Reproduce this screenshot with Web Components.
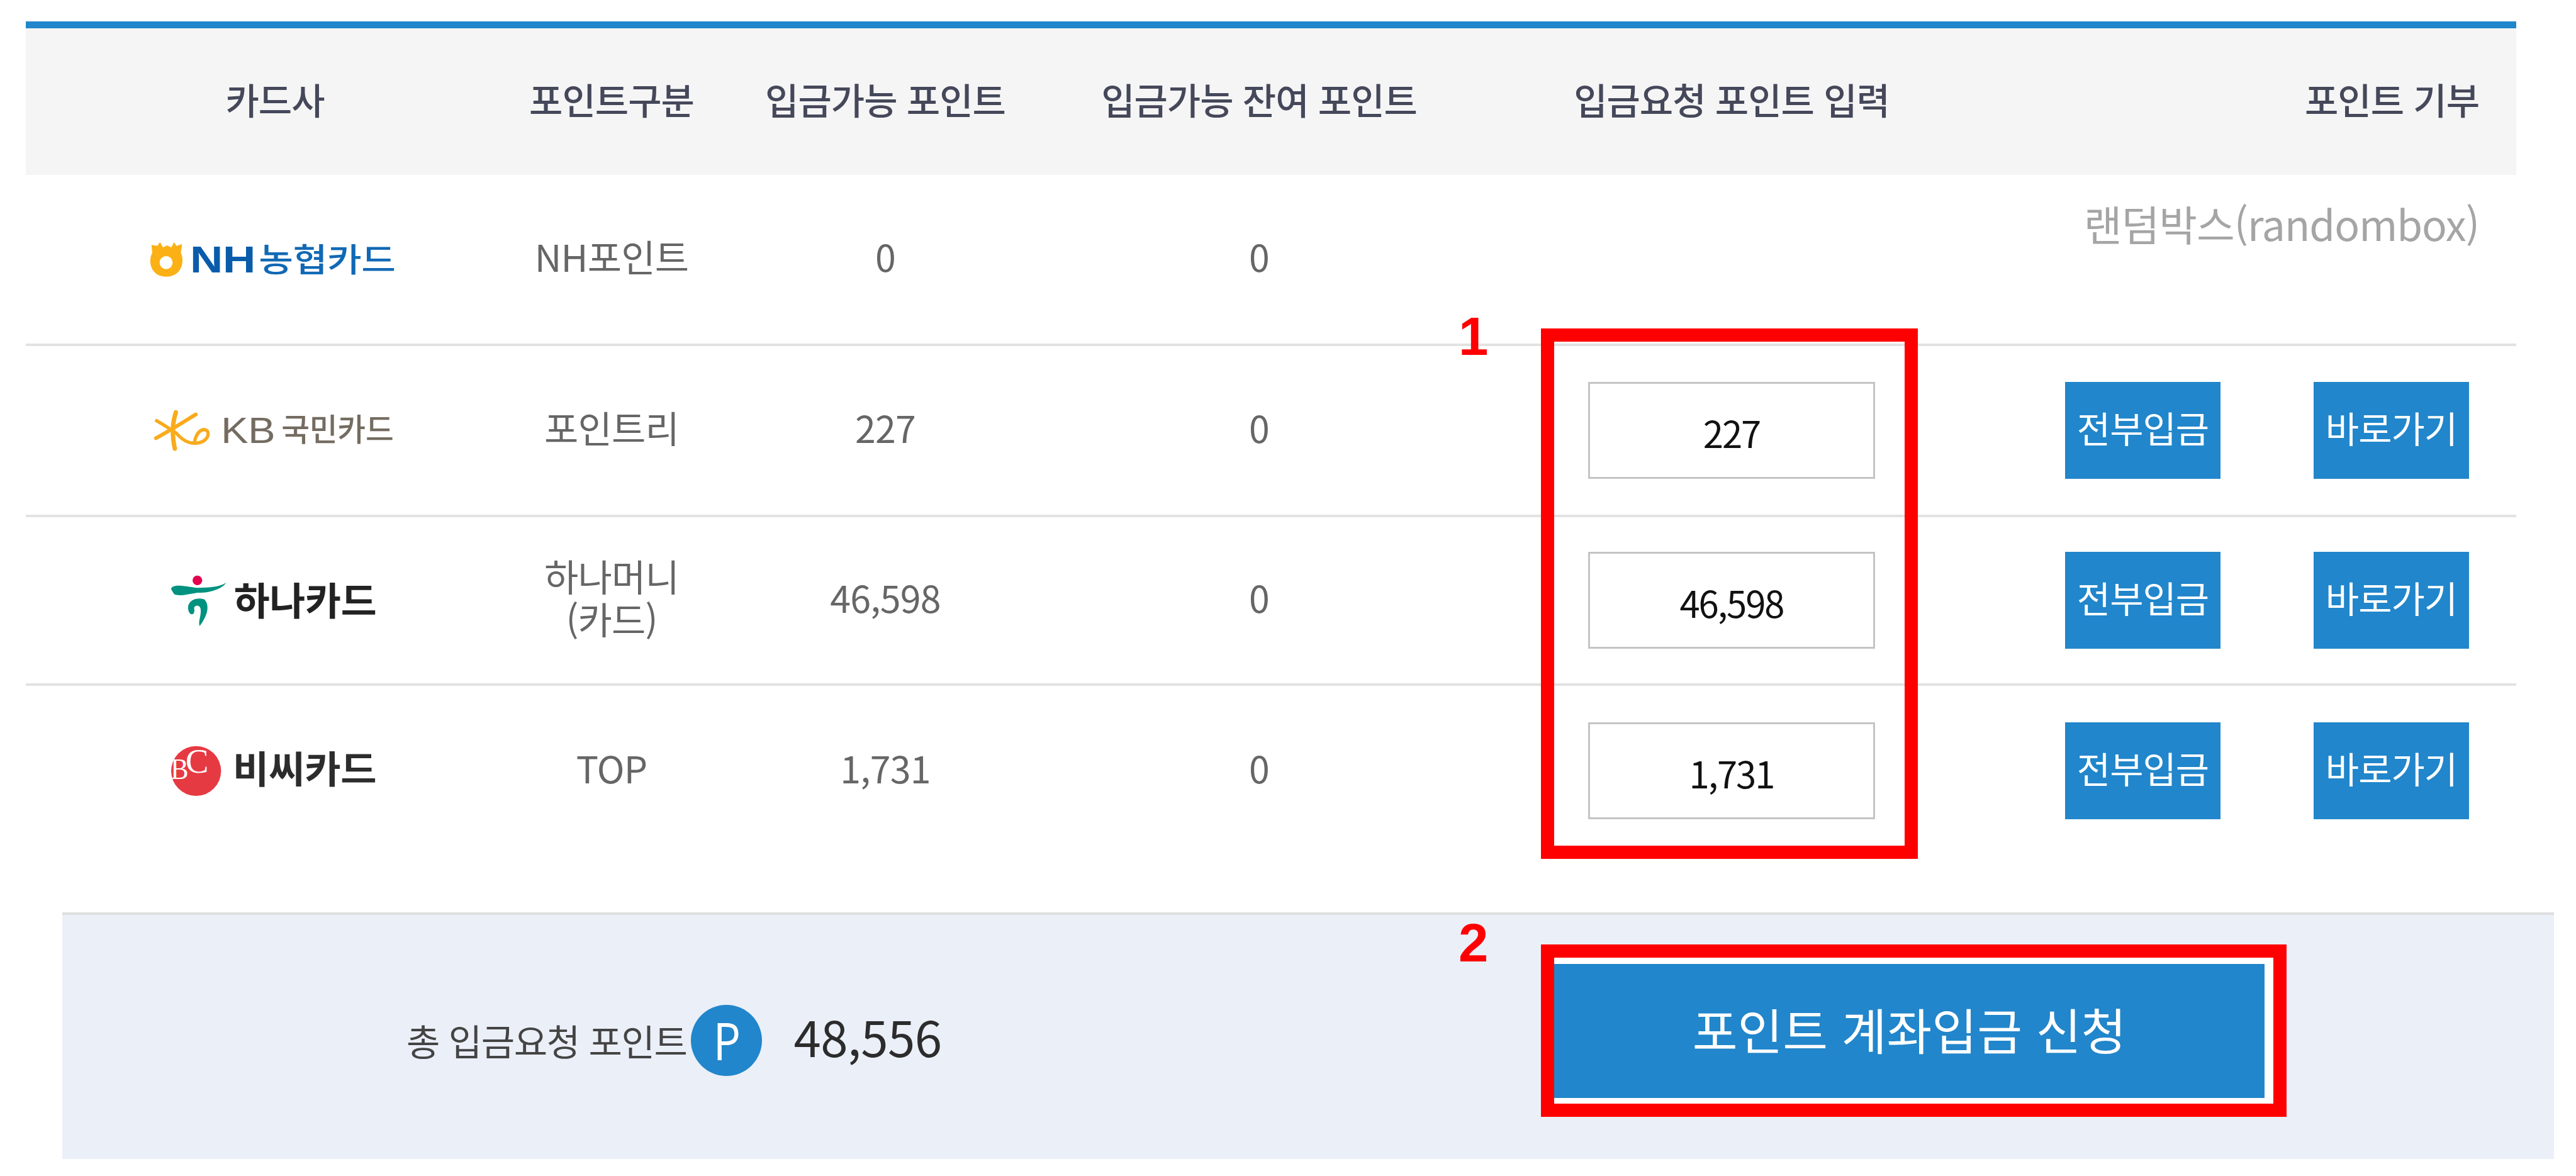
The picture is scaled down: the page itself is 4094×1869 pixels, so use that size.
<!DOCTYPE html>
<html lang="ko">
<head>
<meta charset="utf-8">
<title>포인트 계좌입금</title>
<style>
  html, body { margin: 0; background: #fff; }
  body {
    width: 4094px; height: 1869px; overflow: hidden; position: relative;
    font-family: "Noto Sans CJK KR", "Noto Sans", sans-serif;
    --cols: 792px 278px 592px 596px 906px 794px;
  }
</style>
</head>
<body>
  <point-page>
    <point-table>
      <point-row h="272">
        <card-logo slot="logo" name="nh"></card-logo>
        <span slot="kind">NH포인트</span>
        <span slot="avail">0</span>
        <span slot="rest">0</span>
        <span slot="note">랜덤박스(randombox)</span>
      </point-row>
      <point-row h="272">
        <card-logo slot="logo" name="kb"></card-logo>
        <span slot="kind">포인트리</span>
        <span slot="avail">227</span>
        <span slot="rest">0</span>
        <amount-field slot="field">227</amount-field>
        <action-btn slot="act">전부입금</action-btn>
        <action-btn slot="act">바로가기</action-btn>
      </point-row>
      <point-row h="268">
        <card-logo slot="logo" name="hana"></card-logo>
        <span slot="kind">하나머니<br>(카드)</span>
        <span slot="avail">46,598</span>
        <span slot="rest">0</span>
        <amount-field slot="field">46,598</amount-field>
        <action-btn slot="act">전부입금</action-btn>
        <action-btn slot="act">바로가기</action-btn>
      </point-row>
      <point-row h="270" last>
        <card-logo slot="logo" name="bc"></card-logo>
        <span slot="kind">TOP</span>
        <span slot="avail">1,731</span>
        <span slot="rest">0</span>
        <amount-field slot="field">1,731</amount-field>
        <action-btn slot="act">전부입금</action-btn>
        <action-btn slot="act">바로가기</action-btn>
      </point-row>
    </point-table>
    <sum-panel total="48,556" label="포인트 계좌입금 신청">총 입금요청 포인트</sum-panel>
    <mark-box n="1" x="2449" y="522" w="599" h="843" nx="2318" ny="486"></mark-box>
    <mark-box n="2" x="2449" y="1501" w="1185" h="274" nx="2318" ny="1450"></mark-box>
  </point-page>

<script>
class PointPage extends HTMLElement {
  constructor() {
    super();
    this.attachShadow({ mode: 'open' }).innerHTML = `
      <style>
        :host { display: block; padding: 34px 0 0 41px; }
      </style>
      <slot></slot>`;
  }
}

class PointTable extends HTMLElement {
  constructor() {
    super();
    this.attachShadow({ mode: 'open' }).innerHTML = `
      <style>
        :host { display: block; width: 3958px; }
        .head {
          display: grid; grid-template-columns: var(--cols);
          height: 233px; align-items: center;
          border-top: 11px solid #2186cb; background: #f5f5f5;
          color: #45485a; font-size: 58px; font-weight: 500; letter-spacing: -1px; text-align: center;
        }
        .head div { padding-bottom: 10px; }
        .head .last { text-align: right; padding-right: 59px; }
      </style>
      <div class="head">
        <div>카드사</div><div>포인트구분</div><div>입금가능 포인트</div>
        <div>입금가능 잔여 포인트</div><div>입금요청 포인트 입력</div><div class="last">포인트 기부</div>
      </div>
      <slot></slot>`;
  }
}

class PointRow extends HTMLElement {
  constructor() {
    super();
    this.attachShadow({ mode: 'open' }).innerHTML = `
      <style>
        :host { display: block; }
        .row {
          display: grid; grid-template-columns: var(--cols); align-items: center;
          box-sizing: border-box; border-bottom: 4px solid #e2e2e2;
          color: #666; font-size: 59px; line-height: 68px; letter-spacing: -0.8px; text-align: center;
        }
        :host([last]) .row { border-bottom: 0; }
        .txt { padding-bottom: 10px; }
        .logo { display: flex; justify-content: center; padding-right: 4px; }
        .field { display: flex; justify-content: center; }
        .act { display: flex; justify-content: flex-end; gap: 148px; padding-right: 75px; }
        .note {
          align-self: start; padding: 42px 59px 0 0; text-align: right;
          color: #a5a5a5; font-size: 66px; letter-spacing: -1px;
        }
      </style>
      <div class="row">
        <div class="logo"><slot name="logo"></slot></div>
        <div class="txt"><slot name="kind"></slot></div>
        <div class="txt"><slot name="avail"></slot></div>
        <div class="txt"><slot name="rest"></slot></div>
        <div class="field"><slot name="field"></slot></div>
        <div class="act"><slot name="act"></slot></div>
      </div>`;
    this.shadowRoot.querySelector('.row').style.height = this.getAttribute('h') + 'px';
  }
  connectedCallback() {
    // first row has the note instead of the buttons
    if (this.querySelector('[slot=note]')) {
      const act = this.shadowRoot.querySelector('.act');
      act.className = 'note';
      act.innerHTML = '<slot name="note"></slot>';
    }
  }
}

const LOGOS = {
  nh: { box: '120 90 1170 254', w: 390, h: 84.67, svg: `
    <path d="M122 148 L150 152 L163 134 L177 160 L197 150 L217 160 L230 134 L241 152 L268 144 L262 185 C277 215 272 262 240 285 C215 304 170 304 145 285 C113 262 110 215 126 185Z" fill="#fbb015"/>
    <circle cx="192" cy="232" r="31" fill="#fff"/>
    <text x="306" y="280" font-family="Liberation Sans" font-weight="700" font-size="176" textLength="312" lengthAdjust="spacingAndGlyphs" fill="#0a5cab">NH</text>
    <text x="634" y="277" font-family="Noto Sans CJK KR" font-weight="500" font-size="158" textLength="652" lengthAdjust="spacingAndGlyphs" fill="#1169b5">농협카드</text>` },
  kb: { box: '125 905 1160 250', w: 387, h: 83.33, svg: `
    <g fill="none" stroke="#f9ab1c" stroke-linecap="round">
      <path d="M237 945 C222 990 215 1040 232 1118" stroke-width="21"/>
      <path d="M145 985 C180 1005 210 1025 240 1045 C265 1075 295 1095 335 1092 C385 1088 400 1050 385 1032 C365 1018 335 1035 325 1090" stroke-width="16"/>
      <path d="M142 1068 C205 1035 275 990 332 955" stroke-width="18"/>
    </g>
    <text x="452" y="1090" font-family="Liberation Sans" font-size="172" textLength="258" lengthAdjust="spacingAndGlyphs" fill="#746c61">KB</text>
    <text x="740" y="1082" font-family="Noto Sans CJK KR" font-weight="500" font-size="150" textLength="535" lengthAdjust="spacingAndGlyphs" fill="#746c61">국민카드</text>` },
  hana: { box: '210 75 990 290', w: 330, h: 96.67, svg: `
    <circle cx="341" cy="124" r="23" fill="#e4004f"/>
    <path d="M215 165 C225 140 270 150 340 160 C400 158 450 155 478 135 C460 165 400 185 340 183 C300 190 250 202 230 190Z" fill="#00927f"/>
    <path d="M297 250 C300 215 345 203 375 215 C398 240 395 285 352 342 C343 320 362 290 356 258 C350 240 330 242 325 255 C330 272 325 290 310 285 C300 280 296 265 297 250Z" fill="#00927f"/>
    <text x="515" y="292" font-family="Noto Sans CJK KR" font-weight="700" font-size="185" textLength="680" lengthAdjust="spacingAndGlyphs" fill="#222">하나카드</text>` },
  bc: { box: '210 875 990 314', w: 330, h: 104.67, svg: `
    <circle cx="335" cy="1032" r="119" fill="#e63a43"/>
    <text x="214" y="1070" font-family="Liberation Serif" font-size="140" textLength="84" lengthAdjust="spacingAndGlyphs" fill="#fff">B</text>
    <text x="284" y="1040" font-family="Liberation Serif" font-size="165" fill="#fff">C</text>
    <text x="510" y="1090" font-family="Noto Sans CJK KR" font-weight="700" font-size="180" textLength="685" lengthAdjust="spacingAndGlyphs" fill="#2c2c2c">비씨카드</text>` }
};

class CardLogo extends HTMLElement {
  connectedCallback() {
    const l = LOGOS[this.getAttribute('name')];
    this.attachShadow({ mode: 'open' }).innerHTML = `
      <style>:host { display: block; } svg { display: block; overflow: visible; }</style>
      <svg xmlns="http://www.w3.org/2000/svg" viewBox="${l.box}" width="${l.w}" height="${l.h}">${l.svg}</svg>`;
  }
}

class AmountField extends HTMLElement {
  constructor() {
    super();
    this.attachShadow({ mode: 'open' }).innerHTML = `
      <style>
        :host {
          display: flex; align-items: center; justify-content: center;
          box-sizing: border-box; width: 456px; height: 154px;
          padding-top: 6px; border: 3px solid #c4c4c4; background: #fff;
          color: #111; font-size: 58px; letter-spacing: -2px;
        }
      </style>
      <slot></slot>`;
  }
}

class ActionBtn extends HTMLElement {
  constructor() {
    super();
    this.attachShadow({ mode: 'open' }).innerHTML = `
      <style>
        :host {
          display: flex; align-items: center; justify-content: center;
          width: 247px; height: 154px; padding-bottom: 10px; box-sizing: border-box;
          background: #2186cb; color: #fff; font-size: 58px; letter-spacing: -1px;
        }
      </style>
      <slot></slot>`;
  }
}

class SumPanel extends HTMLElement {
  constructor() {
    super();
    this.attachShadow({ mode: 'open' }).innerHTML = `
      <style>
        :host {
          display: grid; grid-template-columns: 2356px 1159px; align-items: start;
          box-sizing: border-box; width: 3960px; height: 392px;
          margin: 90px 0 0 58px; padding-top: 68px;
          border-top: 4px solid #dedede; background: #ebeff8;
        }
        .sum { display: flex; align-items: center; padding: 68px 0 0 547px; color: #444; font-size: 58px; letter-spacing: -1.4px; }
        .p {
          width: 113px; height: 113px; margin-left: 7px; border-radius: 50%;
          display: flex; align-items: center; justify-content: center;
          background: #2186cb; color: #fff; font-size: 80px; letter-spacing: 0;
        }
        .p i { display: block; font-style: normal; margin-top: -6px; transform: scaleX(.85); }
        .total { margin-left: 50px; padding-bottom: 14px; color: #2c2c2c; font-size: 78px; letter-spacing: -0.5px; }
        .wrap { background: #fff; padding: 10px 15px 9px; }
        button {
          display: block; width: 100%; height: 213px; border: 0; padding: 0 0 8px;
          background: #2186cb; color: #fff; font: inherit; font-size: 78px;
        }
      </style>
      <div class="sum"><span><slot></slot></span><span class="p"><i>P</i></span><span class="total">${this.getAttribute('total')}</span></div>
      <div class="wrap"><button>${this.getAttribute('label')}</button></div>`;
  }
}

// red annotation boxes drawn over the screenshot
class MarkBox extends HTMLElement {
  connectedCallback() {
    const a = n => this.getAttribute(n);
    this.attachShadow({ mode: 'open' }).innerHTML = `
      <style>
        .box { position: absolute; box-sizing: border-box; border: 21px solid #f00; }
        .num { position: absolute; color: #f00; font: 700 85px/98px "Liberation Sans", sans-serif; }
      </style>
      <div class="box" style="left:${a('x')}px;top:${a('y')}px;width:${a('w')}px;height:${a('h')}px"></div>
      <div class="num" style="left:${a('nx')}px;top:${a('ny')}px">${a('n')}</div>`;
  }
}

customElements.define('point-page', PointPage);
customElements.define('point-table', PointTable);
customElements.define('point-row', PointRow);
customElements.define('card-logo', CardLogo);
customElements.define('amount-field', AmountField);
customElements.define('action-btn', ActionBtn);
customElements.define('sum-panel', SumPanel);
customElements.define('mark-box', MarkBox);
</script>
</body>
</html>
